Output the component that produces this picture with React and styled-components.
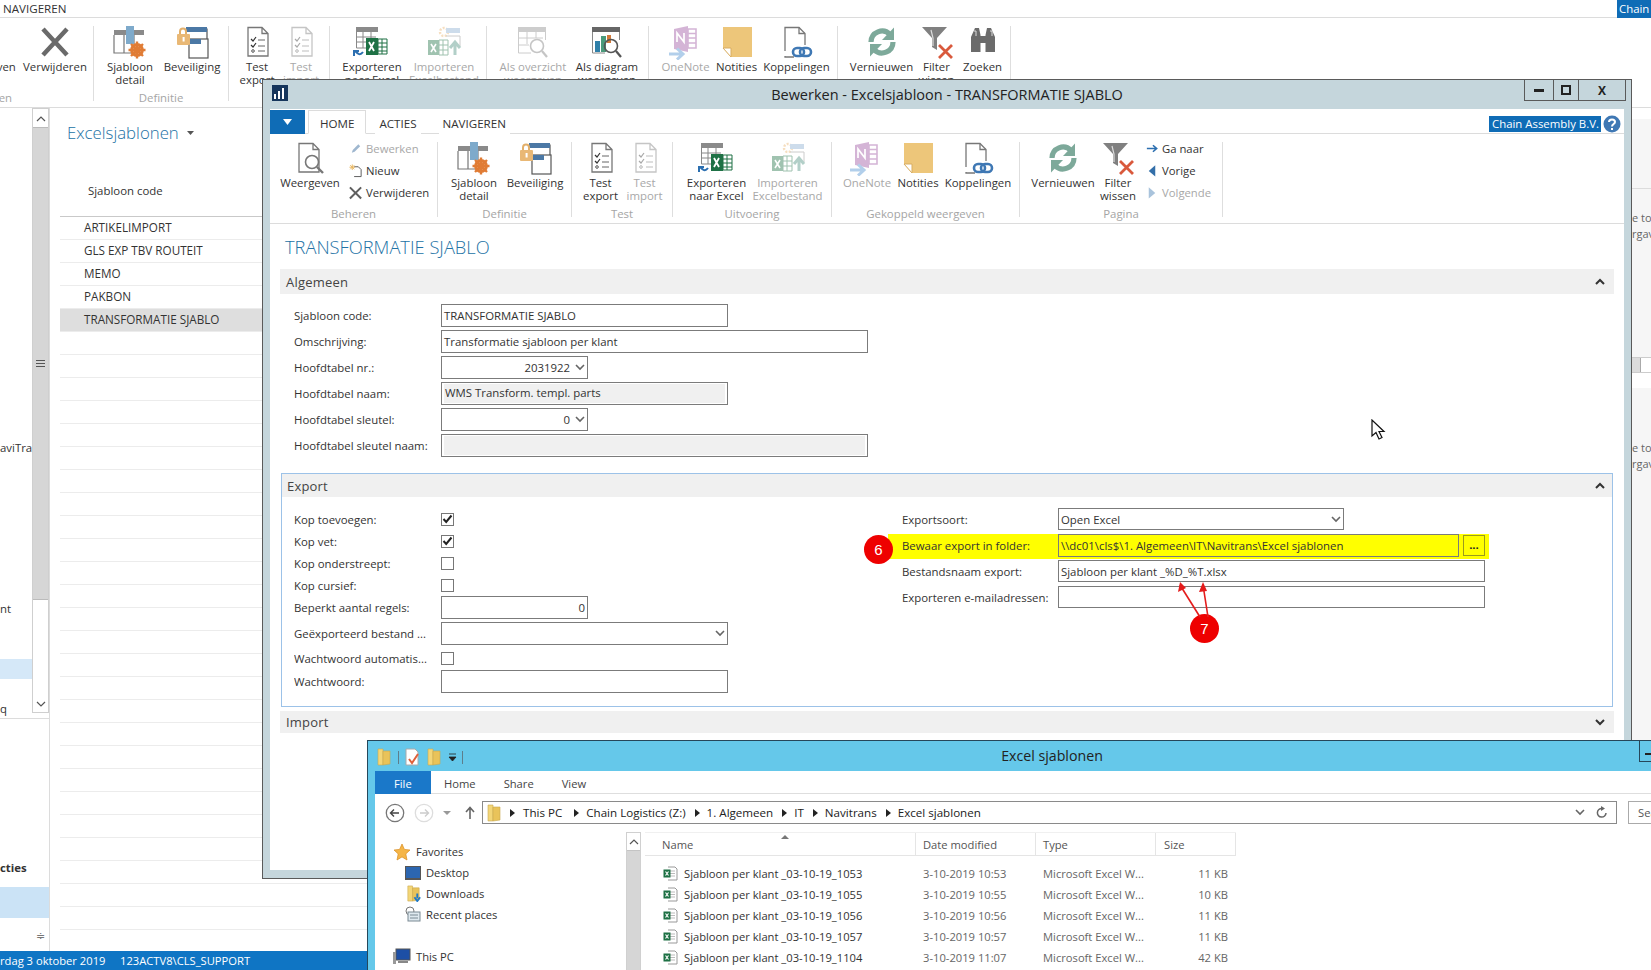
import React from 'react';
import styled, { createGlobalStyle } from 'styled-components';

const Global = createGlobalStyle`
  html, body { margin: 0; padding: 0; width: 1651px; height: 970px; overflow: hidden; background: #fff; }
  body { font-family: "Open Sans", "Liberation Sans", sans-serif; font-size: 11.4px; color: #333; }
  * { box-sizing: border-box; }
`;

const Page = styled.div`position: relative; width: 1651px; height: 970px; overflow: hidden; display: flex; flex-direction: column; background: #fff;`;
const TopBar = styled.div`height: 18px; flex: none; display: flex; justify-content: space-between; border-bottom: 1px solid #dcdcdc; padding-left: 3px; line-height: 17px; font-size: 11.6px;`;
const CompanyTag = styled.div`background: #0f6cb6; color: #fff; height: 18px; padding-left: 2px; width: 34px; overflow: hidden; font-size: 11.4px;`;

const Ribbon = styled.div`height: ${p => p.$h}px; flex: none; display: flex; padding-top: 8px; border-bottom: 1px solid #dcdcdc; background: #fff; font-size: 11.4px;`;
const Group = styled.div`
  flex: none; width: ${p => p.$w}px; height: 75px; margin-left: ${p => p.$ml || 0}px;
  display: flex; flex-direction: column; border-right: 1px solid #dedede;
`;
const GroupItems = styled.div`
  height: 66px; flex: none; display: flex; justify-content: ${p => p.$end ? 'flex-end' : 'center'};
  padding-right: ${p => p.$end ? 2 : 0}px; padding-left: ${p => p.$pl || 0}px;
`;
const GroupLabel = styled.div`height: 12px; flex: none; line-height: 12px; text-align: center; color: #a5a5a5;`;
const BigButton = styled.div`
  flex: none; width: ${p => p.$w}px; display: flex; flex-direction: column; align-items: center;
  color: ${p => p.$dim ? '#a8a8a8' : '#333'};
`;
const IconBox = styled.div`height: 33px; flex: none; display: flex; align-items: flex-start; justify-content: center; opacity: ${p => p.$dim ? 0.42 : 1};`;
const BigLabel = styled.div`line-height: 13px; text-align: center; margin-top: 1px; white-space: pre-line;`;
const SmallCol = styled.div`flex: none; width: ${p => p.$w}px; height: 66px; margin-top: -5px; display: flex; flex-direction: column; padding-left: ${p => p.$pl}px; font-size: 11.3px;`;
const SmallButton = styled.div`height: 22px; flex: none; display: flex; align-items: center; gap: 3px; white-space: nowrap; color: ${p => p.$dim ? '#a8a8a8' : '#333'};`;
const SmallIcon = styled.span`width: 14px; height: 16px; display: inline-flex; align-items: center; justify-content: center; flex: none;`;

const Content = styled.div`flex: 1; display: flex; min-height: 0;`;
const Sidebar = styled.div`width: 50px; flex: none; display: flex; flex-direction: column; border-right: 1px solid #dcdcdc;`;
const SideUpper = styled.div`height: 611px; flex: none; display: flex; border-bottom: 1px solid #dcdcdc;`;
const SideText = styled.div`width: 32px; flex: none; overflow: hidden;`;
const SideLine = styled.div`height: ${p => p.$h || 16}px; flex: none; line-height: 16px; margin-top: ${p => p.$mt}px; white-space: nowrap; font-weight: ${p => p.$bold ? 700 : 400}; background: ${p => p.$bg || 'transparent'};`;
const Scroll = styled.div`width: 17px; height: 605px; flex: none; border: 1px solid #cfcfcf; display: flex; flex-direction: column;`;
const ScrollBtn = styled.div`height: ${p => p.$h}px; display: flex; align-items: center; justify-content: center; background: #fff; flex: none;`;
const ScrollThumb = styled.div`height: ${p => p.$h}px; background: #d6d6d6; flex: none; border-top: 1px solid #bbb; border-bottom: 1px solid #bbb; display: flex; align-items: center; justify-content: center;`;
const ScrollRest = styled.div`flex: 1; background: #fff;`;
const SideGrip = styled.div`margin: 11px 0 0 36px; width: 10px; color: #777; font-size: 11px; line-height: 14px;`;

const ListArea = styled.div`flex: 1; min-width: 0; padding-left: 10px;`;
const ListTitle = styled.div`height: 24px; margin: 13px 0 0 7px; font-size: 16.8px; line-height: 24px; color: #2272a5; font-weight: 300; display: flex; align-items: center; gap: 8px;`;
const ListHead = styled.div`height: 72px; padding: 36px 0 0 28px; border-bottom: 1px solid #c9c9c9; line-height: 20px;`;
const ListRow = styled.div`height: 23px; line-height: 21px; padding-left: 24px; font-size: 11.7px; border-bottom: 1px solid #ececec; background: ${p => p.$sel ? '#dedede' : '#fff'};`;

const RightEdge = styled.div`width: 20px; flex: none; display: flex; flex-direction: column; font-size: 11px; color: #666; overflow: hidden; white-space: nowrap;`;
const EdgePanel = styled.div`height: ${p => p.$h}px; margin-top: ${p => p.$mt}px; background: #f6f6f6; flex: none; display: flex; flex-direction: column;`;
const EdgeLine = styled.div`height: 1px; background: #dcdcdc; margin-top: ${p => p.$mt}px;`;
const EdgeText = styled.div`line-height: 16px; margin-top: ${p => p.$mt}px; padding-left: 1px;`;
const EdgeBar = styled.div`height: 16px; display: flex; background: #fff; margin-top: auto; border-top: 1px solid #ccc; border-bottom: 1px solid #ccc;`;
const EdgeThumb = styled.div`width: 10px; background: #dcdcdc; border-right: 1px solid #aaa;`;

const StatusBar = styled.div`height: 19px; flex: none; background: #0f75c4; color: #fff; line-height: 20px; display: flex; font-size: 11.2px; white-space: nowrap;`;
const StatusItem = styled.div`width: ${p => p.$w}px; flex: none;`;

const Modal = styled.div`
  position: absolute; left: 262px; top: 79px; width: 1370px; height: 800px; z-index: 2;
  border: 1px solid #5a5a5a; background: #c5d6dc; padding: 0 7px 8px; display: flex; flex-direction: column;
`;
const TitleBar = styled.div`height: ${p => p.$h}px; flex: none; display: grid; grid-template-columns: 1fr auto 1fr; align-items: start;`;
const TitleText = styled.div`font-size: ${p => p.$fs}px; line-height: ${p => p.$lh}px; color: #222; white-space: nowrap;`;
const TitleLeft = styled.div`display: flex; align-items: center;`;
const AppLogo = styled.div`margin: 5px 0 0 2px; width: 16px; height: 16px; background: #16365c; display: flex;`;
const WinButtons = styled.div`justify-self: end; display: flex; height: 21px; border: 1px solid #5a5a5a; border-top: none; margin-right: -2px; background: #c5d6dc;`;
const WinButton = styled.div`
  width: ${p => p.$w}px; display: flex; align-items: center; justify-content: center;
  border-right: ${p => p.$last ? 'none' : '1px solid #5a5a5a'}; font-weight: 700; font-size: 12px; color: #222;
`;
const Panel = styled.div`flex: 1; background: #fff; display: flex; flex-direction: column; min-height: 0;`;
const TabRow = styled.div`height: 25px; flex: none; display: flex; align-items: flex-end; border-bottom: 1px solid #dcdcdc;`;
const MenuButton = styled.div`width: 35px; height: 24px; background: #0f6cb6; display: flex; align-items: center; justify-content: center; margin-bottom: -1px;`;
const Tab = styled.div`
  height: 24px; line-height: 26px; padding: 0 ${p => p.$px}px; margin: 0 0 -1px ${p => p.$ml}px; font-size: 11.6px;
  background: #fff; border: 1px solid ${p => p.$active ? '#dcdcdc' : 'transparent'}; border-bottom: 1px solid ${p => p.$active ? '#fff' : 'transparent'};
`;
const CompanyBox = styled.div`margin-left: auto; display: flex; align-items: center; gap: 2px; height: 24px; padding: 5px 3px 0 0;`;
const CompanyName = styled.div`background: #0f6cb6; color: #fff; height: 16px; line-height: 15px; padding: 0 3px; font-size: 11.4px; white-space: nowrap; width: 112px; overflow: hidden;`;
const FormArea = styled.div`padding: 0 10px; flex: 1;`;
const PageTitle = styled.div`height: 24px; margin: 11px 0 10px 5px; font-size: 18.3px; line-height: 24px; font-weight: 300; color: #2272a5; white-space: nowrap;`;
const SectionHead = styled.div`
  height: ${p => p.$h}px; background: #f0f0f0; display: flex; align-items: center; justify-content: space-between;
  padding: 0 9px 0 6px; font-size: 13px; letter-spacing: .2px; color: #444;
`;
const SectionBody = styled.div`padding: ${p => p.$pt}px 0 0 14px;`;
const ExportBox = styled.div`margin: 16px 1px 0; height: 234px; border: 1px solid #9cc2e8;`;
const ExportHead = styled(SectionHead)`padding: 0 7px 0 5px;`;
const ExportBody = styled.div`display: flex; padding: 11px 0 0 12px;`;
const LeftCol = styled.div`width: 608px; flex: none;`;
const RightCol = styled.div`flex: none;`;
const FieldRow = styled.div`height: ${p => p.$h || 23}px; margin: ${p => p.$m || '0 0 3px'}; display: flex; align-items: center; white-space: nowrap;`;
const CheckRow = styled.div`height: 22px; display: flex; align-items: center;`;
const Label = styled.div`width: ${p => p.$w || 147}px; flex: none; overflow: hidden; white-space: nowrap;`;
const Input = styled.div`
  width: ${p => p.$w}px; height: ${p => p.$h || 23}px; border: 1px solid #7b7b7b; padding: 0 2px; display: flex; align-items: center; flex: none;
  justify-content: ${p => p.$right ? 'flex-end' : 'space-between'}; gap: 5px; background: ${p => p.$plain ? 'transparent' : '#fff'};
`;
const FilledInner = styled.div`flex: 1; height: 19px; background: #f0f0f0; line-height: 18px; padding-left: 1px;`;
const Check = styled.div`width: 13px; height: 13px; border: 1px solid #777; display: flex; align-items: center; justify-content: center;`;
const YellowRow = styled.div`
  width: 601px; height: 25px; margin: 0 0 1px -14px; padding-left: 14px; background: #ffff00; display: flex; align-items: flex-start;
`;
const YellowLabel = styled.div`width: 156px; line-height: 23px; flex: none;`;
const DotButton = styled.div`width: 22px; height: 21px; margin: 1px 0 0 4px; border: 1px solid #9b9b1c; text-align: center; font-weight: 700; line-height: 18px; color: #222; flex: none;`;
const ImportHead = styled(SectionHead)`margin-top: 4px;`;

const Badge = styled.div`
  position: absolute; left: ${p => p.$x}px; top: ${p => p.$y}px; width: 29px; height: 29px; border-radius: 50%; z-index: 3;
  background: #ee0000; color: #fff; font-size: 15px; line-height: 29px; text-align: center; font-family: "Liberation Sans", sans-serif;
`;
const ArrowLayer = styled.svg`position: absolute; left: 1160px; top: 575px; width: 70px; height: 50px; z-index: 3;`;
const Cursor = styled.svg`position: absolute; left: 1371px; top: 419px; width: 16px; height: 22px; z-index: 3;`;

const Explorer = styled.div`
  position: absolute; left: 367px; top: 740px; width: 1370px; height: 240px; z-index: 4; font-size: 11.2px;
  background: #65c8ea; border: 1px solid #26475a; padding: 0 7px; display: flex; flex-direction: column;
`;
const Qat = styled.div`display: flex; align-items: center; gap: 5px; height: 24px; margin-top: 4px;`;
const QatSep = styled.div`width: 1px; height: 13px; background: #5d7e8c;`;
const ExpTitleControls = styled.div`justify-self: end; width: 90px; height: 21px; border: 1px solid #26475a; border-top: none; background: #65c8ea; display: flex; padding: 12px 0 0 5px;`;
const ControlDash = styled.div`width: 6px; height: 2px; background: #222;`;
const ExpPanel = styled.div`flex: 1; background: #fff; display: flex; flex-direction: column;`;
const ExpTabs = styled.div`height: 23px; flex: none; display: flex; border-bottom: 1px solid #dedede; line-height: 25px; color: #444;`;
const FileTab = styled.div`width: 56px; height: 23px; background: #1a78c9; color: #fff; padding-left: 19px; flex: none;`;
const ExpTab = styled.div`margin-left: ${p => p.$ml}px;`;
const AddressRow = styled.div`height: 38px; flex: none; display: flex; align-items: flex-start; padding-top: 7px;`;
const NavGroup = styled.div`width: 107px; flex: none; height: 23px; display: flex; align-items: center; padding-left: 10px;`;
const AddressBox = styled.div`width: 1135px; height: 23px; flex: none; border: 1px solid #8a8a8a; display: flex; align-items: center; padding: 0 8px 0 2px; font-size: 11.6px;`;
const Crumb = styled.span`display: inline-flex; align-items: center; gap: 7px; margin-left: ${p => p.$ml || 9}px; white-space: nowrap; color: #222;`;
const AddressEnd = styled.div`margin-left: auto; display: flex; align-items: center; gap: 11px;`;
const SearchBox = styled.div`width: 100px; height: 23px; margin-left: 11px; border: 1px solid #aaa; padding-left: 9px; line-height: 21px; color: #555; flex: none; white-space: nowrap; overflow: hidden;`;
const ExpMain = styled.div`flex: 1; display: flex; min-height: 0;`;
const NavPane = styled.div`width: 251px; flex: none; padding-top: 9px;`;
const NavRow = styled.div`height: 21px; display: flex; align-items: center; gap: ${p => p.$gap || 5}px; padding-left: ${p => p.$pl}px; margin-top: ${p => p.$mt || 0}px; color: #333;`;
const ExpScroll = styled.div`width: 15px; flex: none; border: 1px solid #d0d0d0; border-bottom: none; display: flex; flex-direction: column;`;
const ExpScrollBtn = styled.div`height: 17px; display: flex; align-items: center; justify-content: center; flex: none;`;
const ExpScrollThumb = styled.div`flex: 1; background: #d6d6d6; border-top: 1px solid #c4c4c4;`;
const FileList = styled.div`margin-left: 4px; width: 591px; flex: none;`;
const HeadRow = styled.div`height: 24px; display: flex; border-bottom: 1px solid #e5e5e5; border-top: 1px solid #f0f0f0; position: relative; color: #555;`;
const SortMark = styled.div`position: absolute; left: 136px; top: 2px; width: 0; height: 0; border-left: 4px solid transparent; border-right: 4px solid transparent; border-bottom: 4px solid #777;`;
const Col = styled.div`
  width: ${p => p.$w}px; flex: none; padding: 0 ${p => p.$right ? 8 : 0}px 0 ${p => p.$pl}px; display: flex; align-items: center; gap: 6px; white-space: nowrap;
  border-right: ${p => p.$line ? '1px solid #e5e5e5' : 'none'}; justify-content: ${p => p.$right ? 'flex-end' : 'flex-start'}; color: ${p => p.$grey ? '#666' : 'inherit'};
`;
const FileRows = styled.div`margin-top: 7px;`;
const FileRow = styled.div`height: 21px; display: flex; color: #333;`;

/* ---------- icons ---------- */
const S = { fill: 'none', stroke: '#777', strokeWidth: 1.3 };
const Doc = () => <path d="M3 1.5H17L23 7.5V30H3Z M17 1.5V7.5H23" {...S} />;
const IconFrame = ({ w = 36, h = 34, children }) => <svg width={w} height={h} viewBox={`0 0 ${w} ${h}`}>{children}</svg>;

const ICONS = {
  view: () => <IconFrame><g transform="translate(4,0)"><Doc /></g><circle cx="20" cy="20" r="6.5" fill="#fff" stroke="#777" strokeWidth="1.6" /><path d="M25 25L31 31" stroke="#777" strokeWidth="2.4" /></IconFrame>,
  detail: () => <IconFrame><rect x="2" y="4" width="30" height="5" fill="#8a8a8a" /><path d="M2 9V27H24M12 9V27M22 9V18" fill="none" stroke="#777" strokeWidth="1.2" /><path d="M14 0H22V18H14Z" fill="#7eaacb" /><g transform="translate(25,24)"><circle r="5.2" fill="none" stroke="#e07c35" strokeWidth="3.4" /><path d="M0-8.5V8.5M-8.5 0H8.5M-6-6L6 6M-6 6L6-6" stroke="#e07c35" strokeWidth="2.4" /></g></IconFrame>,
  lock: () => <IconFrame><path d="M12 3H33V22" fill="none" stroke="#555" strokeWidth="1.2" /><rect x="12" y="1" width="21" height="5" fill="#4b78a5" /><rect x="15" y="13" width="19" height="19" fill="#fff" stroke="#555" strokeWidth="1.2" /><rect x="15" y="13" width="12" height="5" fill="#4b78a5" /><path d="M6 8V5.5C6 1.5 12 1.5 12 5.5V8" fill="none" stroke="#e3b06b" strokeWidth="2" /><rect x="3" y="8" width="13" height="11" rx="1" fill="#e9b875" /><rect x="8.6" y="11" width="2" height="4.5" fill="#fff" /></IconFrame>,
  test: () => <IconFrame><g transform="translate(6,0)"><Doc /><path d="M6 13L8 15L11 11M6 19L8 21L11 17" fill="none" stroke="#333" strokeWidth="1.2" /><circle cx="8" cy="25" r="1.3" fill="none" stroke="#555" /><path d="M13 14H20M13 20H20M13 25H20" stroke="#666" /></g></IconFrame>,
  exportX: () => <IconFrame w={40}><rect x="4" y="1" width="22" height="5" fill="#8a8a8a" /><path d="M4.5 6V22H18M11 6V22M19 6V12M4 11H24M4 16H16" fill="none" stroke="#888" /><rect x="14" y="12" width="12" height="17" fill="#1e7145" /><path d="M26 13H35V28H26Z M26 17H35M26 21H35M26 25H35M30 13V28" fill="#fff" stroke="#1e7145" /><path d="M17 16L22 25M22 16L17 25" stroke="#fff" strokeWidth="1.8" /><path d="M11 26C8 30 6 28 3 25M2 30V25H7" fill="none" stroke="#2c6fb0" strokeWidth="2" /></IconFrame>,
  importX: () => <IconFrame w={40}><circle cx="20" cy="6" r="4" fill="none" stroke="#eab36a" strokeDasharray="2 1.4" strokeWidth="2.4" /><rect x="22" y="2" width="14" height="5" fill="#8aaed0" /><path d="M22 10H36V20" fill="none" stroke="#888" /><rect x="4" y="14" width="11" height="15" fill="#1e7145" /><path d="M15 14H24V29H15Z M15 19H24M15 24H24M19 14V29" fill="#fff" stroke="#1e7145" /><path d="M7 18L12 26M12 18L7 26" stroke="#fff" strokeWidth="1.6" /><path d="M31 29V18M26 22L31 16L36 22" fill="none" stroke="#4a8f7d" strokeWidth="3" /></IconFrame>,
  table: () => <IconFrame><rect x="3" y="1" width="28" height="5" fill="#8a8a8a" /><path d="M3.5 6V27H16M12 6V18M21 6V12M3 12H28M3 19H14M30.5 6V14" fill="none" stroke="#888" /><circle cx="22" cy="20" r="6.5" fill="#fff" stroke="#777" strokeWidth="1.6" /><path d="M27 25L32 31" stroke="#777" strokeWidth="2.2" /></IconFrame>,
  chart: () => <IconFrame><rect x="3" y="1" width="28" height="5" fill="#333" opacity=".75" /><path d="M3.5 6V27H16M30.5 6V14" fill="none" stroke="#888" /><rect x="6" y="15" width="5" height="11" fill="#2f7fa8" /><rect x="12" y="10" width="5" height="16" fill="#4a9a7b" /><rect x="18" y="9" width="4" height="8" fill="#d27a3b" /><circle cx="22" cy="20" r="6.5" fill="none" stroke="#555" strokeWidth="1.6" /><path d="M27 25L32 31" stroke="#555" strokeWidth="2.2" /></IconFrame>,
  onenote: () => <IconFrame><path d="M6 3L20 0V26L6 23Z" fill="#9b4f9e" /><path d="M20 3H28V22H20Z M20 7.5H28M20 12H28M20 17H28" fill="#fff" stroke="#9b4f9e" strokeWidth="1.6" /><path d="M9 16V7L16 16V7" fill="none" stroke="#fff" strokeWidth="1.7" /><path d="M1 28H14M9 22.5L15 28L9 33.5" fill="none" stroke="#4a8fd0" strokeWidth="3" /></IconFrame>,
  note: () => <IconFrame><path d="M4 1H33V31H12L4 22Z" fill="#edc67a" /><path d="M4 22H12V31Z" fill="#fff" stroke="#d9ad60" /></IconFrame>,
  link: () => <IconFrame><g transform="translate(3,0)"><path d="M3 25V1.5H17L23 7.5V19M3 30V31H12" fill="none" stroke="#777" strokeWidth="1.3" /><path d="M17 1.5V7.5H23" fill="none" stroke="#777" strokeWidth="1.3" /></g><rect x="14" y="22" width="11" height="8" rx="4" fill="none" stroke="#3f78b4" strokeWidth="2.6" /><rect x="21" y="22" width="11" height="8" rx="4" fill="none" stroke="#3f78b4" strokeWidth="2.6" /></IconFrame>,
  refresh: () => <IconFrame><path d="M7 16A11 11 0 0 1 26 8.5" fill="none" stroke="#7da99a" strokeWidth="5.2" /><path d="M30 1.5V14H18Z" fill="#7da99a" /><path d="M29 16A11 11 0 0 1 10 23.5" fill="none" stroke="#7da99a" strokeWidth="5.2" /><path d="M6 30.5V18H18Z" fill="#7da99a" /></IconFrame>,
  filter: () => <IconFrame><path d="M3 1H28L18 12V24L13 21V12Z" fill="#808080" /><path d="M12 4L14 12V20" fill="none" stroke="#ddd" strokeWidth="1.2" /><path d="M20 19L33 32M33 19L20 32" stroke="#d9593c" strokeWidth="2.8" /></IconFrame>,
  zoom: () => <IconFrame><path d="M10 2H14L15.5 9V26H6V11Z M26 2H22L20.5 9V26H30V11Z M15.5 10H20.5V17H15.5Z" fill="#6b6b6b" /><path d="M9 5H11V10M25 5H27V10" stroke="#ddd" fill="none" /></IconFrame>,
  bigX: () => <IconFrame><path d="M6 3L30 29M30 3L6 29" stroke="#6a6a6a" strokeWidth="4.5" /></IconFrame>,
};
const Icon = ({ name, dim }) => { const C = ICONS[name]; return <IconBox $dim={dim}><C /></IconBox>; };

const Big = ({ w, icon, label, dim }) => (
  <BigButton $w={w} $dim={dim}><Icon name={icon} dim={dim} /><BigLabel>{label}</BigLabel></BigButton>
);

const SmallSvg = ({ children }) => <SmallIcon><svg width="15" height="15" viewBox="0 0 15 15">{children}</svg></SmallIcon>;
const Pencil = () => <SmallSvg><path d="M3 12L4 9L10 3L12 5L6 11Z" fill="#9fb7cf" /></SmallSvg>;
const NewDoc = () => <SmallSvg><path d="M5.5 3.5H10L13 6.5V14H5.5" fill="#fff" stroke="#555" /><path d="M3.5 1V7M.5 4H6.5M1.3 1.8L5.7 6.2M5.7 1.8L1.3 6.2" stroke="#e8b65f" /></SmallSvg>;
const XIcon = () => <SmallSvg><path d="M1 2L13 14M13 2L1 14" stroke="#5f5f5f" strokeWidth="2.2" /></SmallSvg>;
const GoTo = () => <SmallSvg><path d="M2 7.5H12M8.5 4L12.5 7.5L8.5 11" fill="none" stroke="#2c6fb0" strokeWidth="1.7" /></SmallSvg>;
const Prev = () => <SmallSvg><path d="M11 2V14L4 8Z" fill="#336fa9" /></SmallSvg>;
const Next = () => <SmallSvg><path d="M4 2V14L11 8Z" fill="#a9c3dc" /></SmallSvg>;
const Chevron = ({ up, color = '#333', w = 2 }) => <svg width="10" height="7" viewBox="0 0 10 7" style={{ flex: 'none' }}><path d={up ? 'M1 6L5 2L9 6' : 'M1 1L5 5L9 1'} fill="none" stroke={color} strokeWidth={w} /></svg>;
const Checkmark = () => <svg width="11" height="10" viewBox="0 0 11 10"><path d="M1.5 5L4.2 8L9.5 1.5" fill="none" stroke="#222" strokeWidth="2" /></svg>;

const FolderIcon = ({ arrow, size = 18 }) => <svg width={size} height={size} viewBox="0 0 18 18" style={{ flex: 'none' }}><path d="M3 1H8V17H3Z" fill="#f3d678" stroke="#c9a94e" strokeWidth=".6" /><path d="M8 3H15V16L8 17Z" fill="#e9c35a" stroke="#c9a94e" strokeWidth=".6" />{arrow && <path d="M13 9V14M10 13L13 17L16 13" fill="none" stroke="#1f79c9" strokeWidth="2" />}</svg>;
const XlsIcon = () => <svg width="15" height="15" viewBox="0 0 15 15" style={{ flex: 'none' }}><path d="M5 1H12L14 3V14H5" fill="#fff" stroke="#999" /><path d="M7 5H12M7 7.5H12M7 10H12" stroke="#bbb" /><rect x="0.5" y="3.5" width="7" height="8" fill="#1e7145" /><path d="M2.5 5.5L5.5 9.5M5.5 5.5L2.5 9.5" stroke="#fff" strokeWidth="1.2" /></svg>;
const Tri = () => <svg width="5" height="8" viewBox="0 0 5 8" style={{ flex: 'none' }}><path d="M0 0L5 4L0 8Z" fill="#222" /></svg>;

const rows = Array.from({ length: 32 });
const names = ['ARTIKELIMPORT', 'GLS EXP TBV ROUTEIT', 'MEMO', 'PAKBON', 'TRANSFORMATIE SJABLO'];
const files = [
  ['1053', '10:53', '11 KB'], ['1055', '10:55', '10 KB'], ['1056', '10:56', '11 KB'], ['1057', '10:57', '11 KB'], ['1104', '11:07', '42 KB'],
];

const Field = ({ label, w, children, fill, right, m }) => (
  <FieldRow $m={m}><Label>{label}</Label><Input $w={w} $right={right}>{fill ? <FilledInner>{children}</FilledInner> : children}</Input></FieldRow>
);
const CheckField = ({ label, on }) => <CheckRow><Label>{label}</Label><Check>{on && <Checkmark />}</Check></CheckRow>;

export default function App() {
  return (
    <Page>
      <Global />
      <TopBar><span>NAVIGEREN</span><CompanyTag>Chain</CompanyTag></TopBar>
      <Ribbon $h={90}>
        <Group $w={208} $ml={-114}>
          <GroupItems $end>
            <Big w={66} icon="view" label="Weergeven" />
            <Big w={72} icon="bigX" label="Verwijderen" />
          </GroupItems>
          <GroupLabel>Beheren</GroupLabel>
        </Group>
        <Group $w={135}><GroupItems><Big w={62} icon="detail" label={'Sjabloon\ndetail'} /><Big w={62} icon="lock" label="Beveiliging" /></GroupItems><GroupLabel>Definitie</GroupLabel></Group>
        <Group $w={101}><GroupItems><Big w={44} icon="test" label={'Test\nexport'} /><Big w={44} icon="test" dim label={'Test\nimport'} /></GroupItems><GroupLabel>Test</GroupLabel></Group>
        <Group $w={157}><GroupItems><Big w={72} icon="exportX" label={'Exporteren\nnaar Excel'} /><Big w={72} icon="importX" dim label={'Importeren\nExcelbestand'} /></GroupItems><GroupLabel>Uitvoering</GroupLabel></Group>
        <Group $w={162}><GroupItems $pl={5}><Big w={74} icon="table" dim label={'Als overzicht\nweergeven'} /><Big w={74} icon="chart" label={'Als diagram\nweergeven'} /></GroupItems><GroupLabel>Weergave</GroupLabel></Group>
        <Group $w={189}><GroupItems $pl={5}><Big w={50} icon="onenote" dim label="OneNote" /><Big w={52} icon="note" label="Notities" /><Big w={68} icon="link" label="Koppelingen" /></GroupItems><GroupLabel>Gekoppeld weergeven</GroupLabel></Group>
        <Group $w={173}><GroupItems $pl={7}><Big w={72} icon="refresh" label="Vernieuwen" /><Big w={38} icon="filter" label={'Filter\nwissen'} /><Big w={54} icon="zoom" label="Zoeken" /></GroupItems><GroupLabel>Pagina</GroupLabel></Group>
      </Ribbon>
      <Content>
        <Sidebar>
          <SideUpper>
            <SideText>
              <SideLine $mt={332}>aviTran</SideLine>
              <SideLine $mt={145}>nt</SideLine>
              <SideLine $mt={42} $h={20} $bg="#d5e8f8" />
              <SideLine $mt={22}>q</SideLine>
            </SideText>
            <Scroll>
              <ScrollBtn $h={18}><Chevron up color="#555" w={1.2} /></ScrollBtn>
              <ScrollThumb $h={473}><svg width="9" height="7" viewBox="0 0 9 7"><path d="M0 .5H9M0 3.5H9M0 6.5H9" stroke="#555" /></svg></ScrollThumb>
              <ScrollRest />
              <ScrollBtn $h={16}><Chevron color="#555" w={1.2} /></ScrollBtn>
            </Scroll>
          </SideUpper>
          <SideText>
            <SideLine $mt={141} $bold>cties</SideLine>
          </SideText>
          <SideLine $mt={11} $h={31} $bg="#cbe3f6" />
          <SideGrip>≑</SideGrip>
        </Sidebar>
        <ListArea>
          <ListTitle>Excelsjablonen<svg width="7" height="4" viewBox="0 0 7 4"><path d="M0 0H7L3.5 4Z" fill="#555" /></svg></ListTitle>
          <ListHead>Sjabloon code</ListHead>
          {rows.map((_, i) => <ListRow key={i} $sel={i === 4}>{names[i] || ''}</ListRow>)}
        </ListArea>
        <RightEdge>
          <EdgePanel $mt={11} $h={254}>
            <EdgeLine $mt={69} />
            <EdgeText $mt={21}>e to</EdgeText>
            <EdgeText $mt={0}>rgav</EdgeText>
            <EdgeBar><EdgeThumb /></EdgeBar>
          </EdgePanel>
          <EdgePanel $mt={15} $h={360}>
            <EdgeText $mt={52}>e to</EdgeText>
            <EdgeText $mt={0}>rgav</EdgeText>
          </EdgePanel>
        </RightEdge>
      </Content>
      <StatusBar><StatusItem $w={120}>rdag 3 oktober 2019</StatusItem><span>123ACTV8\CLS_SUPPORT</span></StatusBar>

      <Modal>
        <TitleBar $h={29}>
          <TitleLeft><AppLogo><svg width="16" height="16" viewBox="0 0 16 16"><path d="M3 14V9M7 14V6M11 14V3" stroke="#fff" strokeWidth="2" /></svg></AppLogo></TitleLeft>
          <TitleText $lh={29} $fs={14.5}>Bewerken - Excelsjabloon - TRANSFORMATIE SJABLO</TitleText>
          <WinButtons>
            <WinButton $w={29}><svg width="10" height="4"><rect width="10" height="3" y="1" fill="#222" /></svg></WinButton>
            <WinButton $w={25}><svg width="10" height="10"><rect x="1" y="1" width="8" height="8" fill="none" stroke="#222" strokeWidth="2" /></svg></WinButton>
            <WinButton $w={46} $last>X</WinButton>
          </WinButtons>
        </TitleBar>
        <Panel>
          <TabRow>
            <MenuButton><svg width="9" height="6" viewBox="0 0 9 6"><path d="M0 0H9L4.5 6Z" fill="#fff" /></svg></MenuButton>
            <Tab $active $px={11} $ml={3}>HOME</Tab>
            <Tab $px={3} $ml={9}>ACTIES</Tab>
            <Tab $px={3} $ml={18}>NAVIGEREN</Tab>
            <CompanyBox>
              <CompanyName>Chain Assembly B.V.</CompanyName>
              <svg width="18" height="18" viewBox="0 0 18 18"><circle cx="9" cy="9" r="8.5" fill="#3f78b4" /><path d="M6 7C6 3.5 12 3.5 12 7C12 9 9 9 9 11.5" fill="none" stroke="#fff" strokeWidth="2" /><rect x="8" y="13" width="2" height="2" fill="#fff" /></svg>
            </CompanyBox>
          </TabRow>
          <Ribbon $h={90}>
            <Group $w={168}>
              <GroupItems $pl={1}>
                <Big w={66} icon="view" label="Weergeven" />
                <SmallCol $w={88} $pl={6}>
                  <SmallButton $dim><Pencil />Bewerken</SmallButton>
                  <SmallButton><NewDoc />Nieuw</SmallButton>
                  <SmallButton><XIcon />Verwijderen</SmallButton>
                </SmallCol>
              </GroupItems>
              <GroupLabel>Beheren</GroupLabel>
            </Group>
            <Group $w={134}><GroupItems><Big w={61} icon="detail" label={'Sjabloon\ndetail'} /><Big w={61} icon="lock" label="Beveiliging" /></GroupItems><GroupLabel>Definitie</GroupLabel></Group>
            <Group $w={101}><GroupItems $pl={1}><Big w={44} icon="test" label={'Test\nexport'} /><Big w={44} icon="test" dim label={'Test\nimport'} /></GroupItems><GroupLabel>Test</GroupLabel></Group>
            <Group $w={159}><GroupItems><Big w={71} icon="exportX" label={'Exporteren\nnaar Excel'} /><Big w={71} icon="importX" dim label={'Importeren\nExcelbestand'} /></GroupItems><GroupLabel>Uitvoering</GroupLabel></Group>
            <Group $w={188}><GroupItems $pl={3}><Big w={50} icon="onenote" dim label="OneNote" /><Big w={52} icon="note" label="Notities" /><Big w={68} icon="link" label="Koppelingen" /></GroupItems><GroupLabel>Gekoppeld weergeven</GroupLabel></Group>
            <Group $w={203}>
              <GroupItems>
                <Big w={72} icon="refresh" label="Vernieuwen" />
                <Big w={38} icon="filter" label={'Filter\nwissen'} />
                <SmallCol $w={78} $pl={8}>
                  <SmallButton><GoTo />Ga naar</SmallButton>
                  <SmallButton><Prev />Vorige</SmallButton>
                  <SmallButton $dim><Next />Volgende</SmallButton>
                </SmallCol>
              </GroupItems>
              <GroupLabel>Pagina</GroupLabel>
            </Group>
          </Ribbon>
          <FormArea>
            <PageTitle>TRANSFORMATIE SJABLO</PageTitle>
            <SectionHead $h={25}>Algemeen<Chevron up /></SectionHead>
            <SectionBody $pt={10}>
              <Field label="Sjabloon code:" w={287}>TRANSFORMATIE SJABLO</Field>
              <Field label="Omschrijving:" w={427}>Transformatie sjabloon per klant</Field>
              <Field label="Hoofdtabel nr.:" w={147} right>2031922<Chevron color="#666" w={1.6} /></Field>
              <Field label="Hoofdtabel naam:" w={287} fill>WMS Transform. templ. parts</Field>
              <Field label="Hoofdtabel sleutel:" w={147} right>0<Chevron color="#666" w={1.6} /></Field>
              <Field label="Hoofdtabel sleutel naam:" w={427} fill> </Field>
            </SectionBody>
            <ExportBox>
              <ExportHead $h={23}>Export<Chevron up /></ExportHead>
              <ExportBody>
                <LeftCol>
                  <CheckField label="Kop toevoegen:" on />
                  <CheckField label="Kop vet:" on />
                  <CheckField label="Kop onderstreept:" />
                  <CheckField label="Kop cursief:" />
                  <Field label="Beperkt aantal regels:" w={147} right m="0 0 3px">0</Field>
                  <Field label="Geëxporteerd bestand ..." w={287} m="1px 0 2px"><span /><Chevron color="#666" w={1.6} /></Field>
                  <CheckField label="Wachtwoord automatis..." />
                  <Field label="Wachtwoord:" w={287} m="1px 0 2px" />
                </LeftCol>
                <RightCol>
                  <FieldRow $h={22} $m="0 0 4px"><Label $w={156}>Exportsoort:</Label><Input $w={286} $h={22}>Open Excel<Chevron color="#666" w={1.6} /></Input></FieldRow>
                  <YellowRow>
                    <YellowLabel>Bewaar export in folder:</YellowLabel>
                    <Input $w={401} $plain>\\dc01\cls$\1. Algemeen\IT\Navitrans\Excel sjablonen</Input>
                    <DotButton>...</DotButton>
                  </YellowRow>
                  <FieldRow $h={22} $m="0 0 4px"><Label $w={156}>Bestandsnaam export:</Label><Input $w={427} $h={22}>Sjabloon per klant _%D_%T.xlsx</Input></FieldRow>
                  <FieldRow $h={22} $m="0 0 4px"><Label $w={156}>Exporteren e-mailadressen:</Label><Input $w={427} $h={22} /></FieldRow>
                </RightCol>
              </ExportBody>
            </ExportBox>
            <ImportHead $h={22}>Import<Chevron /></ImportHead>
          </FormArea>
        </Panel>
      </Modal>

      <Badge $x={864} $y={535}>6</Badge>
      <Badge $x={1190} $y={614}>7</Badge>
      <ArrowLayer viewBox="0 0 70 50">
        <path d="M40 42L20 10" stroke="#e41c1c" strokeWidth="1.6" /><path d="M20 7L18 17L26 13Z" fill="#e41c1c" />
        <path d="M48 42L43 10" stroke="#e41c1c" strokeWidth="1.6" /><path d="M43 7L39 17L47 16Z" fill="#e41c1c" />
      </ArrowLayer>
      <Cursor viewBox="0 0 16 22"><path d="M1 1V17L5 13.5L8 20L11 18.5L8 12.5H13Z" fill="#fff" stroke="#111" strokeWidth="1.2" /></Cursor>

      <Explorer>
        <TitleBar $h={30}>
          <Qat>
            <FolderIcon />
            <QatSep />
            <svg width="16" height="18" viewBox="0 0 16 18"><path d="M2 1H11L14 4V17H2Z" fill="#fff" stroke="#aaa" /><path d="M5 11L8 15L14 6" fill="none" stroke="#e0603a" strokeWidth="2" /></svg>
            <FolderIcon />
            <svg width="9" height="8" viewBox="0 0 9 8"><path d="M1 1H8M1 4H8L4.5 8Z" fill="#222" stroke="#222" strokeWidth=".8" /></svg>
            <QatSep />
          </Qat>
          <TitleText $lh={30} $fs={14.2}>Excel sjablonen</TitleText>
          <ExpTitleControls><ControlDash /></ExpTitleControls>
        </TitleBar>
        <ExpPanel>
          <ExpTabs>
            <FileTab>File</FileTab>
            <ExpTab $ml={13}>Home</ExpTab>
            <ExpTab $ml={28}>Share</ExpTab>
            <ExpTab $ml={28}>View</ExpTab>
          </ExpTabs>
          <AddressRow>
            <NavGroup>
              <svg width="90" height="20" viewBox="0 0 90 20" style={{ flex: 'none' }}>
                <circle cx="10" cy="10" r="8.7" fill="#fff" stroke="#777" strokeWidth="1.3" /><path d="M14 10H6M9 6.5L5.5 10L9 13.5" fill="none" stroke="#444" strokeWidth="1.4" />
                <circle cx="39" cy="10" r="8.7" fill="#fff" stroke="#ddd" strokeWidth="1.3" /><path d="M35 10H43M40 6.5L43.5 10L40 13.5" fill="none" stroke="#ccc" strokeWidth="1.4" />
                <path d="M58 8H66L62 12Z" fill="#999" />
                <path d="M85 16V5M81 9L85 4.5L89 9" fill="none" stroke="#666" strokeWidth="1.6" />
              </svg>
            </NavGroup>
            <AddressBox>
              <FolderIcon />
              <Crumb $ml={7}><Tri /></Crumb>
              <Crumb $ml={8}>This PC</Crumb><Crumb $ml={12}><Tri />Chain Logistics (Z:)</Crumb><Crumb><Tri />1. Algemeen</Crumb><Crumb><Tri />IT</Crumb><Crumb><Tri />Navitrans</Crumb><Crumb><Tri />Excel sjablonen</Crumb>
              <AddressEnd><Chevron color="#666" w={1.6} /><svg width="12" height="13" viewBox="0 0 12 13"><path d="M10 7A4.3 4.3 0 1 1 6 2.5" fill="none" stroke="#666" strokeWidth="1.5" /><path d="M5 0L9 2.5L5 5Z" fill="#666" /></svg></AddressEnd>
            </AddressBox>
            <SearchBox>Search Excel sjablonen</SearchBox>
          </AddressRow>
          <ExpMain>
            <NavPane>
              <NavRow $pl={18}>
                <svg width="18" height="18" viewBox="0 0 18 18"><path d="M9 1L11.4 6.4L17 7L12.8 10.9L14 17L9 13.9L4 17L5.2 10.9L1 7L6.6 6.4Z" fill="#f5b547" stroke="#d98c20" strokeWidth=".7" /></svg>
                Favorites
              </NavRow>
              <NavRow $pl={30}>
                <svg width="16" height="14" viewBox="0 0 16 14"><rect x=".5" y=".5" width="15" height="12" fill="#2c66b0" stroke="#555" /><rect x="0" y="12" width="16" height="2" fill="#555" /></svg>
                Desktop
              </NavRow>
              <NavRow $pl={30} $gap={4}><FolderIcon arrow size={17} />Downloads</NavRow>
              <NavRow $pl={30} $gap={4}>
                <svg width="17" height="17" viewBox="0 0 17 17"><circle cx="5" cy="5" r="4" fill="#fff" stroke="#777" /><rect x="3" y="6" width="12" height="9" fill="#dfe9ef" stroke="#7b8a94" /><path d="M5 9H13M5 12H13" stroke="#7b8a94" /></svg>
                Recent places
              </NavRow>
              <NavRow $pl={18} $mt={21}>
                <svg width="18" height="17" viewBox="0 0 18 17"><rect x="3" y="1" width="14" height="11" fill="#1d4fa5" stroke="#555" /><rect x="0" y="4" width="3" height="12" fill="#999" /><rect x="5" y="13" width="10" height="2" fill="#888" /></svg>
                This PC
              </NavRow>
            </NavPane>
            <ExpScroll>
              <ExpScrollBtn><Chevron up color="#555" w={1.2} /></ExpScrollBtn>
              <ExpScrollThumb />
            </ExpScroll>
            <FileList>
              <HeadRow>
                <SortMark />
                <Col $w={271} $pl={17} $line>Name</Col>
                <Col $w={120} $pl={7} $line>Date modified</Col>
                <Col $w={120} $pl={7} $line>Type</Col>
                <Col $w={80} $pl={8} $line>Size</Col>
              </HeadRow>
              <FileRows>
                {files.map(([c, t, s]) => (
                  <FileRow key={c}>
                    <Col $w={271} $pl={18}><XlsIcon />Sjabloon per klant _03-10-19_{c}</Col>
                    <Col $w={120} $pl={7} $grey>3-10-2019 {t}</Col>
                    <Col $w={120} $pl={7} $grey>Microsoft Excel W...</Col>
                    <Col $w={80} $pl={8} $right $grey>{s}</Col>
                  </FileRow>
                ))}
              </FileRows>
            </FileList>
          </ExpMain>
        </ExpPanel>
      </Explorer>
    </Page>
  );
}
